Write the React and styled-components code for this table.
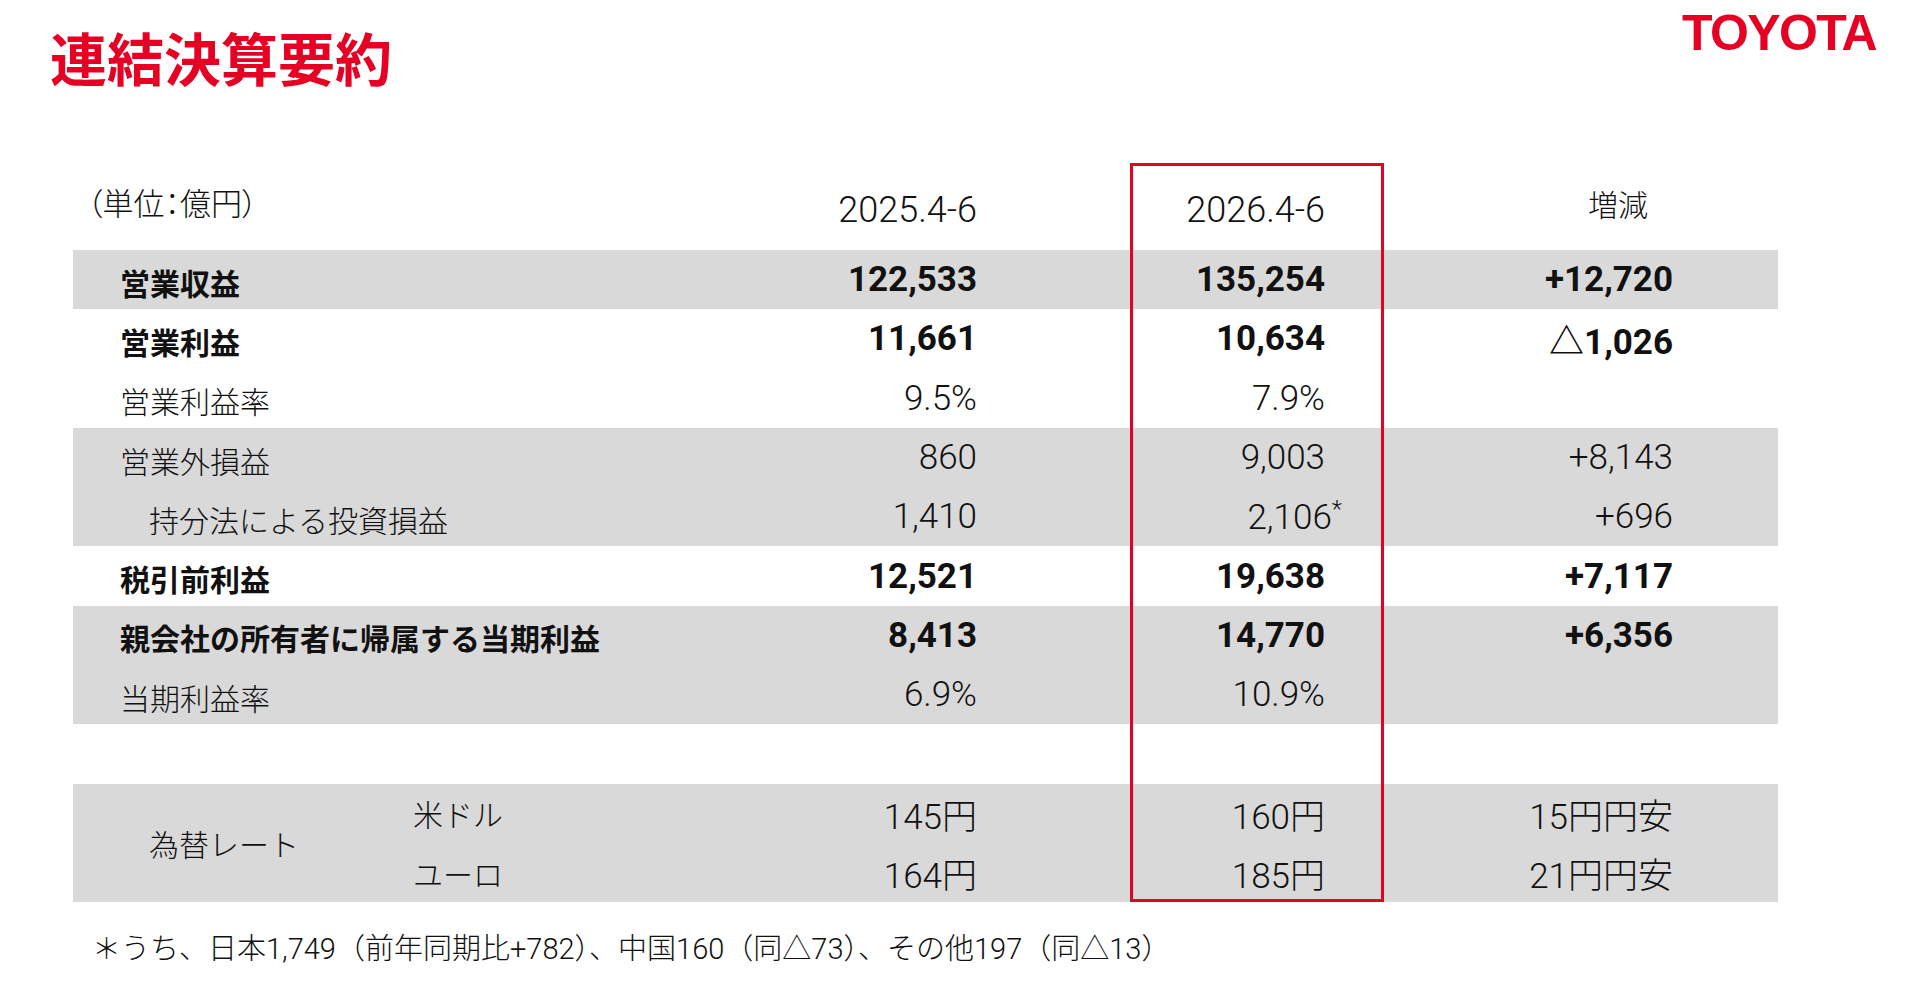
import React from "react";
import styled, { createGlobalStyle } from "styled-components";

const GlobalStyle = createGlobalStyle`
    html, body {
        margin: 0;
        padding: 0;
        background: #ffffff;
    }
    body {
        font-family: "Noto Sans CJK JP", "Noto Sans", sans-serif;
        color: #111111;
    }
`;

const RED = "#e60023";
const SHADE = "#d9d9d9";
const JP = `"Noto Sans CJK JP", "Noto Sans", sans-serif`;
const NUM = `Roboto, "Liberation Sans", "Noto Sans CJK JP", sans-serif`;
const COLS = "560px 344px 348px 348px 105px";
const ROW_H = "59.3px";

const Slide = styled.div`
    width: 1920px;
    height: 992px;
    overflow: hidden;
    display: flex;
    flex-direction: column;
`;

const Header = styled.header`
    display: flex;
    justify-content: space-between;
    align-items: flex-start;
    padding: 0 44px 0 50px;
`;

const Title = styled.h1`
    margin: 28px 0 0;
    font-family: ${JP};
    font-size: 57px;
    line-height: 56px;
    font-weight: 700;
    color: ${RED};
`;

const Logo = styled.div`
    margin-top: 8px;
    font-family: "Liberation Sans", Arial, sans-serif;
    font-size: 50px;
    line-height: 50px;
    font-weight: 700;
    letter-spacing: -1.6px;
    color: ${RED};
`;

const TableWrap = styled.section`
    position: relative;
    width: 1705px;
    margin: 79px 0 0 73px;
`;

const HeadRow = styled.div`
    display: grid;
    grid-template-columns: ${COLS};
    height: 87px;
    align-items: center;
`;

const Unit = styled.div`
    padding: 0 0 10px 14px;
    font-family: ${JP};
    font-size: 31px;
    font-weight: 300;
    font-feature-settings: "palt";
`;

const Period = styled.div`
    text-align: right;
    padding-top: 6px;
    font-family: ${NUM};
    font-size: 36px;
    font-weight: 300;
`;

const DiffHead = styled.div`
    text-align: right;
    padding: 0 25px 8px 0;
    font-family: ${JP};
    font-size: 30px;
    font-weight: 300;
`;

const Row = styled.div`
    display: grid;
    grid-template-columns: ${COLS};
    height: ${ROW_H};
    align-items: center;
    background: ${(p) => (p.$shade ? SHADE : "transparent")};
`;

const Label = styled.div`
    padding-left: ${(p) => (p.$indent ? 76 : 47)}px;
    padding-top: 4px;
    font-family: ${JP};
    font-size: 30px;
    font-weight: ${(p) => (p.$bold ? 700 : 300)};
    white-space: nowrap;
`;

const Num = styled.div`
    text-align: right;
    font-family: ${NUM};
    font-size: 35px;
    font-weight: ${(p) => (p.$bold ? 700 : 300)};
    white-space: nowrap;
`;

const Sup = styled.span`
    display: inline-block;
    margin-right: -17px;
    vertical-align: 12px;
    font-size: 24px;
`;

const FxBlock = styled.div`
    display: grid;
    grid-template-columns: 280px 280px 344px 348px 348px 105px;
    grid-template-rows: ${ROW_H} ${ROW_H};
    align-items: center;
    background: ${SHADE};
`;

const FxGroup = styled.div`
    grid-row: 1 / span 2;
    padding-left: 76px;
    font-family: ${JP};
    font-size: 30px;
    font-weight: 300;
`;

const FxName = styled.div`
    padding-left: 60px;
    font-family: ${JP};
    font-size: 30px;
    font-weight: 300;
`;

const Highlight = styled.div`
    position: absolute;
    left: 1057px;
    top: 0;
    width: 254px;
    height: 100%;
    box-sizing: border-box;
    border: 3px solid ${RED};
    pointer-events: none;
`;

const Note = styled.p`
    margin: 28px 0 0 92px;
    font-family: ${NUM};
    font-size: 29px;
    font-weight: 300;
    line-height: 38px;
`;

const rows = [
    { label: "営業収益", bold: true, shade: true, a: "122,533", b: "135,254", d: "+12,720" },
    { label: "営業利益", bold: true, a: "11,661", b: "10,634", d: "△1,026" },
    { label: "営業利益率", a: "9.5%", b: "7.9%", d: "" },
    { label: "営業外損益", shade: true, a: "860", b: "9,003", d: "+8,143" },
    { label: "持分法による投資損益", indent: true, shade: true, a: "1,410", b: "2,106", star: true, d: "+696" },
    { label: "税引前利益", bold: true, a: "12,521", b: "19,638", d: "+7,117" },
    { label: "親会社の所有者に帰属する当期利益", bold: true, shade: true, a: "8,413", b: "14,770", d: "+6,356" },
    { label: "当期利益率", shade: true, a: "6.9%", b: "10.9%", d: "" },
];

const fx = [
    { name: "米ドル", a: "145円", b: "160円", d: "15円円安" },
    { name: "ユーロ", a: "164円", b: "185円", d: "21円円安" },
];

export default function App() {
    return (
        <>
        <GlobalStyle />
        <Slide>
            <Header>
                <Title>連結決算要約</Title>
                <Logo>TOYOTA</Logo>
            </Header>
            <TableWrap>
                <HeadRow>
                    <Unit>（単位：億円）</Unit>
                    <Period>2025.4-6</Period>
                    <Period>2026.4-6</Period>
                    <DiffHead>増減</DiffHead>
                </HeadRow>
                {rows.map((r, idx) => (
                    <Row $shade={r.shade} key={idx}>
                        <Label $bold={r.bold} $indent={r.indent}>{r.label}</Label>
                        <Num $bold={r.bold}>{r.a}</Num>
                        <Num $bold={r.bold}>{r.b}{r.star && <Sup>*</Sup>}</Num>
                        <Num $bold={r.bold}>{r.d}</Num>
                    </Row>
                ))}
                <Row />
                <FxBlock>
                    <FxGroup>為替レート</FxGroup>
                    {fx.map((f, idx) => (
                        <React.Fragment key={idx}>
                            <FxName>{f.name}</FxName>
                            <Num>{f.a}</Num>
                            <Num>{f.b}</Num>
                            <Num>{f.d}</Num>
                            <div />
                        </React.Fragment>
                    ))}
                </FxBlock>
                <Highlight />
            </TableWrap>
            <Note>＊うち、日本1,749（前年同期比+782）、中国160（同△73）、その他197（同△13）</Note>
        </Slide>
        </>
    );
}
